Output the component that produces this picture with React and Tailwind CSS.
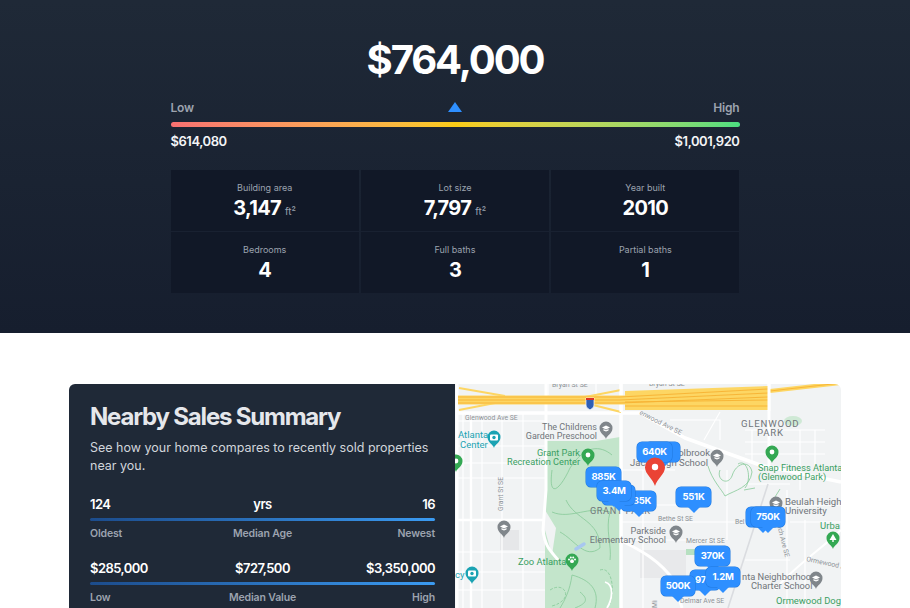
import React from "react";

const stats = [
  { label: "Building area", value: "3,147", unit: "ft²" },
  { label: "Lot size", value: "7,797", unit: "ft²" },
  { label: "Year built", value: "2010" },
  { label: "Bedrooms", value: "4" },
  { label: "Full baths", value: "3" },
  { label: "Partial baths", value: "1" },
];

function Stat({ label, value, unit }) {
  return (
    <div className="flex h-[61px] flex-col items-center bg-[#111827] pt-[12px]">
      <div className="text-[9px] leading-[12px] text-[#9ca3af]">{label}</div>
      <div className="mt-[2px] flex items-baseline leading-[24px]">
        <span className="text-[20px] font-bold tracking-[-0.7px] text-white">{value}</span>
        {unit && <span className="ml-[4px] text-[10px] text-[#9ca3af]">{unit}</span>}
      </div>
    </div>
  );
}

function SummaryRow({ values, labels }) {
  return (
    <div>
      <div className="grid grid-cols-3 text-[13px] font-semibold leading-[18px] tracking-[-0.55px] text-white">
        <span className="text-left">{values[0]}</span>
        <span className="text-center">{values[1]}</span>
        <span className="text-right">{values[2]}</span>
      </div>
      <div className="mt-[5px] h-[3px] rounded-full bg-gradient-to-r from-[#1c4c8c] to-[#3b9bf2]" />
      <div className="mt-[6px] grid grid-cols-3 text-[10.5px] font-semibold leading-[14px] tracking-[-0.15px] text-[#9ca3af]">
        <span className="text-left">{labels[0]}</span>
        <span className="text-center">{labels[1]}</span>
        <span className="text-right">{labels[2]}</span>
      </div>
    </div>
  );
}

const drop = (cx, cy, r, h) =>
  `M${cx},${cy + h} C${cx - 1},${cy + h - 4} ${cx - r},${cy + r * 0.9} ${cx - r},${cy} A${r},${r} 0 1 1 ${cx + r},${cy} C${cx + r},${cy + r * 0.9} ${cx + 1},${cy + h - 4} ${cx},${cy + h} Z`;

function Poi({ x, y, color, kind }) {
  return (
    <g>
      <path d={drop(x, y, 6.5, 11)} fill={color} />
      {kind === "school" && (
        <path d={`M${x - 4},${y - 0.5} L${x},${y - 2.5} L${x + 4},${y - 0.5} L${x},${y + 1.5} Z M${x - 2.5},${y + 1} L${x},${y + 2.3} L${x + 2.5},${y + 1} V${y + 2.5} L${x},${y + 3.6} L${x - 2.5},${y + 2.5} Z`} fill="#fff" />
      )}
      {kind === "dot" && <circle cx={x} cy={y} r="2.4" fill="#fff" />}
      {kind === "camera" && (
        <g fill="#fff">
          <rect x={x - 4} y={y - 2.5} width="8" height="6" rx="1" />
          <circle cx={x} cy={y + 0.5} r="1.7" fill={color} />
        </g>
      )}
      {kind === "paw" && (
        <g fill="#fff">
          <circle cx={x} cy={y + 1.2} r="1.9" />
          <circle cx={x - 3} cy={y - 0.6} r="1" />
          <circle cx={x - 1.2} cy={y - 2.4} r="1" />
          <circle cx={x + 1.2} cy={y - 2.4} r="1" />
          <circle cx={x + 3} cy={y - 0.6} r="1" />
        </g>
      )}
      {kind === "tree" && <path d={`M${x},${y - 4} L${x + 3.5},${y + 2} H${x + 0.7} V${y + 4} H${x - 0.7} V${y + 2} H${x - 3.5} Z`} fill="#fff" />}
    </g>
  );
}

const grey = "#70757a";
const green = "#3a9f62";
const teal = "#1ba3b3";
const roadGrey = "#8d9297";
const pinGrey = "#80868b";

const labels = [
  ["Bryan St SE", 552, 387, 7, roadGrey],
  ["Bryan St SE", 649, 386, 7, roadGrey],
  ["Glenwood Ave SE", 465, 419.5, 6.8, roadGrey],
  ["The Childrens", 597, 430, 9, grey, "end"],
  ["Garden Preschool", 597, 439, 9, grey, "end"],
  ["Atlanta", 458, 437.5, 9.5, teal],
  ["Center", 460, 447.5, 9.5, teal],
  ["Grant Park", 580, 455.5, 9.2, green, "end"],
  ["Recreation Center", 580, 464.5, 9.2, green, "end"],
  ["Jackson", 630, 465.5, 9.5, grey],
  ["Colbrook", 710, 455.5, 9.5, grey, "end"],
  ["gh School", 708, 465.5, 9.5, grey, "end"],
  ["GLENWOOD", 741, 427, 9.6, grey, "start", 0.8],
  ["PARK", 757, 436, 9.6, grey, "start", 0.8],
  ["Snap Fitness Atlanta", 758, 470.5, 9.2, green],
  ["(Glenwood Park)", 758, 479.5, 9.2, green],
  ["Beulah Heights", 785, 504.5, 9.6, grey],
  ["University", 785, 513.5, 9.6, grey],
  ["GRANT PARK", 590, 514, 9.2, grey, "start", 0.6],
  ["Parkside", 666, 533.5, 9.2, grey, "end"],
  ["Elementary School", 666, 542.5, 9.2, grey, "end"],
  ["Zoo Atlanta", 518, 565, 9.4, green],
  ["cy", 455, 578, 9.5, teal],
  ["Urba", 820, 528.5, 9.5, green],
  ["Bethe St SE", 658, 520.5, 6.8, roadGrey],
  ["Bel", 735, 523.5, 6.8, roadGrey],
  ["Mercer St SE", 686, 542.5, 6.8, roadGrey],
  ["Delmar Ave SE", 680, 603, 6.8, roadGrey],
  ["nta Neighborhood", 742, 579.5, 9.3, grey],
  ["Charter School", 751, 588.5, 9.3, grey],
  ["Ormewood Dog", 776, 603.5, 9.4, green],
];

function MapArt() {
  return (
    <svg className="absolute inset-0 h-full w-full" viewBox="455 384 386 420" preserveAspectRatio="none">
      <rect x="455" y="384" width="386" height="420" fill="#f1f3f4" />
      {/* parks */}
      <path d="M545,441 L596,441 L620,437 L620,804 L545,804 L545,530 L552,555 L556,528 L545,510 Z" fill="#c3e5cb" />
      <rect x="686" y="549" width="9" height="6" fill="#b7e0c1" />
      <rect x="500" y="530" width="19" height="20" fill="#e6e7e9" />
      <rect x="640" y="550" width="46" height="28" fill="#e8e9eb" />
      <ellipse cx="793" cy="421" rx="9" ry="5" fill="#cfe9d5" />
      {/* minor streets */}
      <g stroke="#ffffff" strokeWidth="1.2" fill="none">
        <path d="M463,412 V804 M482,412 V804 M502,412 V804 M523,412 V804" />
        <path d="M458,421 H545 M458,446 H545 M458,463 H545 M458,478 H545 M458,552 H545 M458,572 H545 M458,590 H545" />
        <path d="M643,470 V608 M727,470 V540 M787,490 V608 M805,520 V608" />
        <path d="M620,470 H675 M620,505 H690 M620,522 H760 M620,540 H725 M790,505 H841 M790,522 H841 M745,560 H790" />
        <path d="M745,430 H825 M745,442 H825 M745,454 H825 M745,484 H790 M752,430 V462 M800,430 V490 M815,430 V470" />
        <path d="M720,412 L704,440 M670,420 H720 V440 M596,384 V395 M548,384 V395" />
      </g>
      {/* main roads */}
      <g stroke="#ffffff" fill="none" strokeLinejoin="round">
        <path d="M457,384 V804" strokeWidth="3" />
        <path d="M471,412 V804" strokeWidth="2.4" />
        <path d="M458,520 H545" strokeWidth="2.6" />
        <path d="M458,413 H640 L685,438 L760,465 L841,482" strokeWidth="3.5" />
        <path d="M546,384 V490 L543,530 C545,548 552,552 558,560" strokeWidth="3" />
        <path d="M621,384 V804" strokeWidth="3.5" />
        <path d="M769,384 V470" strokeWidth="3" />
        <path d="M620,540 C640,550 660,560 675,582 L682,608" strokeWidth="3" />
      </g>
      <path d="M768,484 L728,608" stroke="#dadce0" strokeWidth="1.6" fill="none" />
      <path d="M775,590 C790,570 820,550 841,530" stroke="#ffffff" strokeWidth="2" fill="none" />
      {/* park paths */}
      <g stroke="#86c998" strokeWidth="0.8" fill="none">
        <path d="M552,470 C548,500 560,490 570,468 C585,445 600,445 612,455 M552,512 C570,520 590,505 610,512 C605,530 612,545 610,560" />
        <path d="M566,500 C575,520 600,520 600,548 C585,560 575,540 560,532 M572,575 C570,590 565,600 560,608 M572,575 C590,580 600,590 595,608 M580,592 C590,600 585,604 575,608" />
        <path d="M550,590 C565,580 575,600 552,606 M600,570 C612,566 615,590 610,604" strokeDasharray="3 1.5" />
        <path d="M708,466 C712,480 722,490 725,496 C735,490 750,488 752,472 C750,460 736,462 732,476 C728,486 716,480 720,470" />
        <path d="M738,464 C748,458 752,480 745,488" />
        <path d="M744,490 L755,488 M775,497 L780,489" />
      </g>
      <path d="M576,549 L584,544" stroke="#a8c7f0" strokeWidth="3.5" strokeLinecap="round" />
      <path d="M605,582 C615,585 612,600 607,608" stroke="#ffffff" strokeWidth="1.8" fill="none" />
      {/* highway */}
      <g fill="none" strokeLinejoin="round">
        <path d="M625,391 L768,386 V410 H625 Z" fill="#fdd663" />
        <path d="M458,400 H640" stroke="#fdd663" strokeWidth="9" />
        <path d="M770,391 L841,383" stroke="#fdd663" strokeWidth="4" />
        <path d="M459,388 L505,396 M459,410 L495,403 M585,403 L621,412 M585,397 L621,390" stroke="#fdd663" strokeWidth="2.2" />
        <g stroke="#f5a623" strokeWidth="0.9" opacity="0.75">
          <path d="M458,397 H620 L768,389" />
          <path d="M458,400 H620 L768,393" />
          <path d="M458,403 H620 L768,397" />
          <path d="M625,402 L768,400" />
          <path d="M625,406 H768" />
          <path d="M770,391 L841,383" />
        </g>
        <path d="M621,384 V395 M621,405 V412 M769,384 V411" stroke="#ffffff" strokeWidth="3" />
      </g>
      <path d="M586,398 H594 V405 C594,408 591,409 590,410 C589,409 586,408 586,405 Z" fill="#2f5fb5" stroke="#fff" strokeWidth="0.7" />
      <rect x="586" y="398" width="8" height="2" fill="#d93025" />
      {/* labels */}
      <g fontFamily="Roboto, sans-serif">
        {labels.map(([t, x, y, s, c, a, ls]) => (
          <text key={t + x} x={x} y={y} fontSize={s} fill={c} textAnchor={a || "start"} letterSpacing={ls || 0}>
            {t}
          </text>
        ))}
        <text transform="translate(639,414) rotate(27)" fontSize="6.8" fill={roadGrey}>enwood Ave SE</text>
        <text transform="translate(503,511) rotate(-90)" fontSize="6.8" fill={roadGrey}>Grant St SE</text>
        <text transform="translate(777,525) rotate(76)" fontSize="6.8" fill={roadGrey}>nch Ave SE</text>
        <text transform="translate(806,561) rotate(12)" fontSize="6.8" fill={roadGrey}>Ormewood A</text>
        <text transform="translate(657,608) rotate(-90)" fontSize="6.8" fill={roadGrey}>Mi</text>
      </g>
      {/* POIs */}
      <Poi x={456} y={461} color="#34a853" kind="dot" />
      <Poi x={494} y={437} color={teal} kind="camera" />
      <Poi x={606} y={428} color={pinGrey} kind="school" />
      <Poi x={588} y={455} color="#34a853" kind="dot" />
      <Poi x={717} y={456} color={pinGrey} kind="school" />
      <Poi x={772} y={452} color="#34a853" kind="dot" />
      <Poi x={776} y={503} color={pinGrey} kind="school" />
      <Poi x={676} y={532} color={pinGrey} kind="school" />
      <Poi x={504} y={527} color={pinGrey} kind="school" />
      <Poi x={572} y={560} color="#34a853" kind="paw" />
      <Poi x={472} y={573} color={teal} kind="camera" />
      <Poi x={833} y={538} color="#34a853" kind="tree" />
      <Poi x={816} y={578} color={pinGrey} kind="school" />
    </svg>
  );
}

const pins = [
  { x: 645, y: 442, w: 35, t: "" },
  { x: 637, y: 442, w: 35, t: "640K" },
  { x: 586, y: 467, w: 35, t: "885K" },
  { x: 621, y: 491, w: 35, t: "85K", align: "justify-end pr-[5px]" },
  { x: 602, y: 485, w: 33, t: "" },
  { x: 597, y: 481, w: 34, t: "3.4M" },
  { x: 676, y: 487, w: 35, t: "551K" },
  { x: 746, y: 507, w: 33, t: "" },
  { x: 751, y: 507, w: 34, t: "750K" },
  { x: 695, y: 546, w: 35, t: "370K" },
  { x: 690, y: 570, w: 30, t: "97", align: "justify-start pl-[5px]" },
  { x: 706, y: 567, w: 34, t: "1.2M" },
  { x: 661, y: 576, w: 34, t: "500K" },
];

function PricePin({ x, y, w, t, align }) {
  return (
    <div
      className={`absolute flex h-[20px] items-center rounded-[5px] bg-[#2e8fff] text-[9.5px] font-bold tracking-[-0.3px] text-white shadow-[0_0_0_0.5px_#1f78de] ${align || "justify-center"}`}
      style={{ left: x - 455, top: y - 384, width: w }}
    >
      {t}
      <div className="absolute left-1/2 top-full h-0 w-0 -translate-x-1/2 border-x-[6px] border-t-[6px] border-x-transparent border-t-[#2e8fff]" />
    </div>
  );
}

export default function App() {
  return (
    <div className="h-[608px] overflow-hidden bg-white [font-family:Inter,sans-serif]">
      <section className="flex h-[333px] flex-col items-center bg-gradient-to-b from-[#1f2937] to-[#161e2e] pt-[35px]">
        <h1 className="text-[40px] font-bold leading-[50px] tracking-[-2.1px] text-white">$764,000</h1>
        <div className="mt-[12px] w-[569px]">
          <div className="relative flex h-[22px] items-center justify-between text-[12px] font-semibold tracking-[-0.2px] text-[#9ca3af]">
            <span>Low</span>
            <svg className="absolute left-[277px] top-[5px]" width="14" height="10" viewBox="0 0 14 10">
              <path d="M7,0 L14,10 H0 Z" fill="#2e8fff" />
            </svg>
            <span>High</span>
          </div>
          <div className="mt-[3px] h-[5px] rounded-full bg-gradient-to-r from-[#f87171] via-[#facc15] to-[#4ade80]" />
          <div className="mt-[5px] flex justify-between text-[13px] font-semibold leading-[18px] tracking-[-0.45px] text-[#f3f4f6]">
            <span>$614,080</span>
            <span>$1,001,920</span>
          </div>
          <div className="mt-[20px] grid grid-cols-3 gap-x-[2px] gap-y-px">
            {stats.map((s) => (
              <Stat key={s.label} {...s} />
            ))}
          </div>
        </div>
      </section>
      <section className="flex justify-center pt-[51px]">
        <div className="flex h-[420px] w-[772px] overflow-hidden rounded-[6px]">
          <div className="w-[386px] shrink-0 bg-[#1f2937] pl-[21px] pr-[20px] pt-[18px]">
            <h2 className="text-[24px] font-bold leading-[30px] tracking-[-1.2px] text-[#e5e7eb]">Nearby Sales Summary</h2>
            <p className="mt-[7px] text-[12.5px] leading-[18px] text-[#d1d5db]">
              See how your home compares to recently sold properties near you.
            </p>
            <div className="mt-[20px] flex flex-col gap-[18px]">
              <SummaryRow values={["124", "yrs", "16"]} labels={["Oldest", "Median Age", "Newest"]} />
              <SummaryRow values={["$285,000", "$727,500", "$3,350,000"]} labels={["Low", "Median Value", "High"]} />
            </div>
          </div>
          <div className="relative flex-1">
            <MapArt />
            {pins.map((p, i) => (
              <PricePin key={i} {...p} />
            ))}
            <svg className="absolute left-[189px] top-[73px]" width="22" height="30" viewBox="0 0 22 30">
              <path d="M11,29 C9,22 1,17 1,10.5 A10,10 0 1 1 21,10.5 C21,17 13,22 11,29 Z" fill="#ea4335" />
              <circle cx="11" cy="10" r="3.2" fill="#fff" />
            </svg>
          </div>
        </div>
      </section>
    </div>
  );
}
